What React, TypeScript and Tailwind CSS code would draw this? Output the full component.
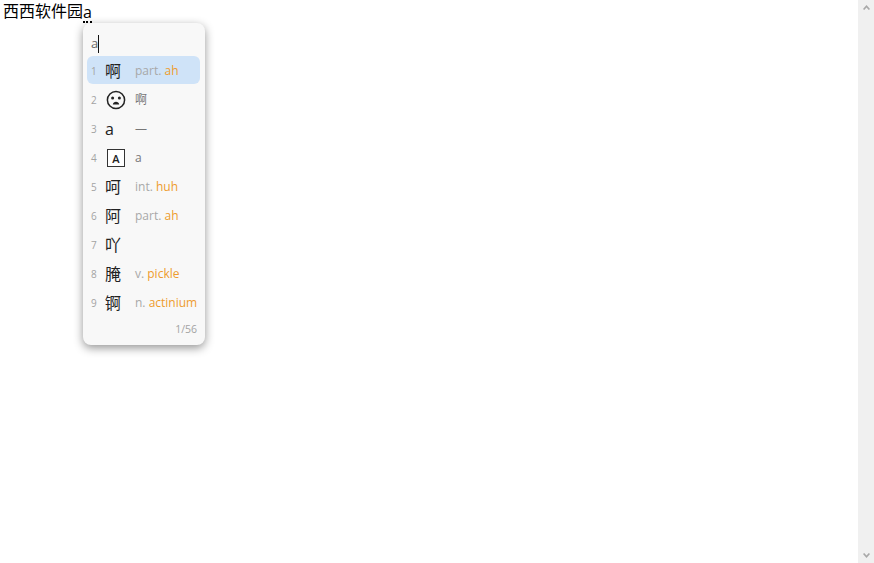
import React from "react";

type Row = { n: number; c: React.ReactNode; pre?: string; en?: string; zh?: string; active?: boolean };

function Face() {
  return (
    <svg width="20" height="20" viewBox="0 0 20 20" fill="none" className="block ml-[1px]">
      <circle cx="10" cy="10" r="8.6" stroke="#222" strokeWidth="1.5" />
      <circle cx="6.6" cy="8" r="1.5" fill="#222" />
      <circle cx="13.4" cy="8" r="1.5" fill="#222" />
      <path d="M6.8 14.6 C7.2 10.8 12.8 10.8 13.2 14.6 Z" fill="#222" />
    </svg>
  );
}

function BoxA() {
  return (
    <div className="ml-[2px] w-[18px] h-[18px] border border-[#333] flex items-center justify-center text-[11px] font-semibold leading-none text-[#222] bg-white">
      A
    </div>
  );
}

const rows: Row[] = [
  { n: 1, c: "啊", pre: "part.", en: "ah", active: true },
  { n: 2, c: <Face />, zh: "啊" },
  { n: 3, c: "a", zh: "—" },
  { n: 4, c: <BoxA />, zh: "a" },
  { n: 5, c: "呵", pre: "int.", en: "huh" },
  { n: 6, c: "阿", pre: "part.", en: "ah" },
  { n: 7, c: "吖" },
  { n: 8, c: "腌", pre: "v.", en: "pickle" },
  { n: 9, c: "锕", pre: "n.", en: "actinium" },
];

export default function App() {
  return (
    <div className="relative h-[563px] w-[874px] overflow-hidden bg-white flex font-['Open_Sans','Noto_Sans_CJK_SC',sans-serif]">
      <main className="flex-1 pl-[3px] pt-[3px]">
        <div className="text-[16px] leading-[18px] text-black flex items-start font-['Liberation_Sans','Noto_Sans_CJK_SC',sans-serif]">
          <span>西西软件园</span>
          <span className="inline-block h-[20px] w-[9px] border-b-2 border-dotted border-black font-['Open_Sans',sans-serif]">a</span>
        </div>
      </main>
      <aside className="w-4 bg-[#f0f0f0] flex flex-col justify-between items-center py-[4px]">
        <svg width="9" height="7" viewBox="0 0 9 7" className="block">
          <path d="M4.5 1 L8 5 L6.8 6 L4.5 3.4 L2.2 6 L1 5 Z" fill="#a8a8a8" />
        </svg>
        <svg width="9" height="7" viewBox="0 0 9 7" className="block">
          <path d="M4.5 6 L8 2 L6.8 1 L4.5 3.6 L2.2 1 L1 2 Z" fill="#a8a8a8" />
        </svg>
      </aside>

      <div className="absolute left-[83px] top-[23px] w-[122px] h-[322px] rounded-[8px] bg-[#f8f8f8] shadow-[0_3px_10px_rgba(0,0,0,0.42)] flex flex-col">
        <div className="h-[33px] pl-[8px] flex items-end text-[13px] text-[#666]">
          <span className="leading-[20px] pb-[3px]">a</span>
          <span className="w-px h-[18px] bg-[#111] mb-[3px]" />
        </div>
        <div className="flex flex-col pl-[4px] pr-[5px]">
          {rows.map((r) => (
            <div
              key={r.n}
              className={`h-[28px] mb-px flex items-center rounded-[6px] pt-[2px] ${r.active ? "bg-[#cfe3f8]" : ""}`}
            >
              <span className="w-[13px] pl-[4px] text-[10px] leading-none text-[#a3a3a3] -mt-[1px]">{r.n}</span>
              <span className="w-[35px] pl-[5px] text-[16px] leading-none text-[#222] flex items-center justify-start shrink-0">
                {r.c}
              </span>
              <span className="text-[12px] whitespace-nowrap leading-none">
                {r.zh && <span className="text-[#777]">{r.zh}</span>}
                {r.pre && <span className="text-[#a8a8a8]">{r.pre} </span>}
                {r.en && <span className="text-[#ee9c2e]">{r.en}</span>}
              </span>
            </div>
          ))}
        </div>
        <div className="text-right pr-[8px] pt-[7px] text-[10.5px] leading-none text-[#a3a3a3]">1/56</div>
      </div>
    </div>
  );
}
